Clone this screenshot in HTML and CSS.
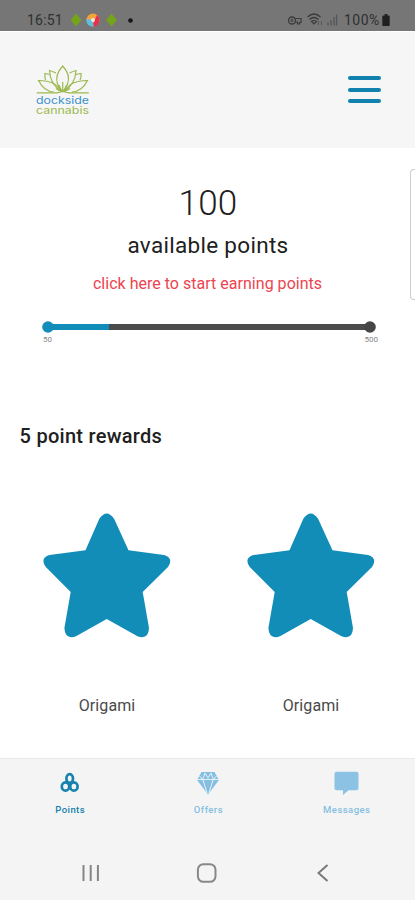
FILE: index.html
```html
<!DOCTYPE html>
<html lang="en">
<head>
<meta charset="utf-8">
<title>Points</title>
<link rel="stylesheet" href="styles.css">
</head>
<body>
<div class="screen">
  <div class="status">
    <span class="clock">16:51</span>
    <svg class="notifs" width="66" height="16" viewBox="0 0 66 16">
      <path class="leaf" d="M6 1.500L11.500 8L6 14.500L.500 8Z"/>
      <circle cx="23" cy="8" r="6.500" fill="#f3a43a"/>
      <path d="M27 3a6.500 6.500 0 0 1-5 11.500l2-5z" fill="#e5304f"/>
      <path d="M16.500 7a6.500 6.500 0 0 0 7.500 7.500L22 8z" fill="#5cbfe0"/>
      <circle cx="23" cy="8" r="2" fill="#f2e6dd"/>
      <path class="leaf" d="M41.500 1.500L47 8L41.500 14.500L36 8Z"/>
      <circle cx="60.500" cy="8.500" r="2.300" fill="#151515"/>
    </svg>
    <svg class="signals" width="54" height="16" viewBox="0 0 54 16" fill="none" stroke="#3a3a3a">
      <circle cx="5" cy="8.500" r="3.500" stroke-width="1.300"/>
      <circle cx="5" cy="8.500" r="1" stroke-width="1"/>
      <path d="M8 6.500h6v4h-1.500v1.500h-2v-2H8" stroke-width="1.200"/>
      <path d="M20.500 5q6.500-6 13 0M22.500 7.500q4.500-4 9 0M24.500 9.500q2.500-2 5 0L27 12z" stroke-width="1.200"/>
      <path d="M31.500 9v4M34.500 13V9" stroke-width="1" stroke="#555"/>
      <path d="M41 13.500v-3M44 13.500V8M47 13.500V5M49.500 13.500V2.500" stroke-width="1.300" stroke="#555"/>
    </svg>
    <span class="percent">100%</span>
    <svg class="battery" width="8" height="12" viewBox="0 0 8 13"><path d="M2.500 0h3v1.500H7q1 0 1 1V12q0 1-1 1H1q-1 0-1-1V2.500q0-1 1-1h1.500z" fill="#202020"/></svg>
  </div>

  <header class="header">
    <svg class="logo" width="58" height="56" viewBox="34 62 58 56">
      <g class="lotus">
        <path d="M62.700 66Q71 75 67.500 84Q66 88.500 62.700 91.500Q59 88.500 57.500 84Q54.500 75 62.700 66Z"/>
        <path d="M56 73Q51 71 49.500 70.500Q50 84 61.500 91.500M69.500 73Q74.500 71 76 70.500Q75.500 84 64 91.500"/>
        <path d="M49.500 74.500L45 73.500Q44.500 77 45.500 80M76 74.500L81 73.500Q81.500 77 80 80"/>
        <path d="M61 91.500Q57 83 48 81.500Q43 80.500 38.500 80.500Q44 91.500 54 92M64.500 91.500Q69 83 78 81.500Q83 80.500 87.500 80.500Q82 91.500 72 92"/>
        <path d="M36.800 92.800H57L62.700 91.500L69 92.800H88.800M62.700 91V82M61.500 91L59 85M64 91L66.500 85M60.500 91.500L56 88.500M65 91.500L70 88.500"/>
      </g>
      <text class="brand blue" x="36" y="104" textLength="53" lengthAdjust="spacingAndGlyphs">dockside</text>
      <text class="brand green" x="36" y="113.500" textLength="53" lengthAdjust="spacingAndGlyphs">cannabis</text>
    </svg>
    <div class="menu"><i></i><i></i><i></i></div>
  </header>

  <main class="content">
    <section class="balance">
      <div class="total">100</div>
      <div class="label">available points</div>
      <div class="earn">click here to start earning points</div>
      <div class="progress">
        <svg width="336" height="14" viewBox="0 0 336 14">
          <path d="M7 7H329" stroke="#4b4b4b" stroke-width="6"/>
          <circle cx="329" cy="7" r="5.800" fill="#464646"/>
          <path d="M7 7H68" stroke="#118db9" stroke-width="6"/>
          <circle cx="7" cy="7" r="5.800" fill="#118db9"/>
        </svg>
        <div class="range"><span>50</span><span>500</span></div>
      </div>
    </section>
    <h2 class="heading">5 point rewards</h2>
    <section class="rewards">
      <div class="reward">
        <svg width="128" height="125" viewBox="0 0 128 125"><path class="star" d="M42.500 37.300L56.200 6Q63.700-5 71.200 6L85.500 37.300L121 42Q131 45 125 54L99.700 79L106 115Q105.500 127 94.500 123.300L63.700 106L33 123.300Q22 127 21.400 115L27.700 79L2.800 54Q-3.500 45 6.500 42Z"/></svg>
        <span>Origami</span>
      </div>
      <div class="reward">
        <svg width="128" height="125" viewBox="0 0 128 125"><path class="star" d="M42.500 37.300L56.200 6Q63.700-5 71.200 6L85.500 37.300L121 42Q131 45 125 54L99.700 79L106 115Q105.500 127 94.500 123.300L63.700 106L33 123.300Q22 127 21.400 115L27.700 79L2.800 54Q-3.500 45 6.500 42Z"/></svg>
        <span>Origami</span>
      </div>
    </section>
    <div class="edge-handle"></div>
  </main>

  <footer class="footer">
    <nav class="tabs">
      <div class="tab active">
        <svg width="26" height="26" viewBox="0 0 26 26" fill="none" stroke="#1581ad" stroke-width="2.700">
          <ellipse cx="12.700" cy="8.500" rx="3.300" ry="4.300"/>
          <ellipse cx="8.500" cy="16.500" rx="3.700" ry="4.200"/>
          <ellipse cx="16.900" cy="16.500" rx="3.700" ry="4.200"/>
        </svg>
        <span>Points</span>
      </div>
      <div class="tab">
        <svg width="26" height="26" viewBox="0 0 26 26">
          <path d="M6.500 2H19.500L24 10L13 24.500L2 10Z" fill="#84bfe2"/>
          <path d="M2 9.500H24M4.500 6L7.500 9.500L10 3L13 8L16 3L18.500 9.500L21.500 6M8 10L12 23M18 10L14 23" fill="none" stroke="#f4f5f6" stroke-width=".9"/>
        </svg>
        <span>Offers</span>
      </div>
      <div class="tab">
        <svg width="26" height="26" viewBox="0 0 26 26"><path d="M2.500 1.700H22.500Q24.500 1.700 24.500 3.700V18.500Q24.500 20.300 22.500 20.300H14.500L9 25V20.300H2.500Q.5 20.300 .5 18.500V3.700Q.5 1.700 2.500 1.700Z" fill="#8cc2e4"/></svg>
        <span>Messages</span>
      </div>
    </nav>
    <div class="system">
      <svg width="24" height="20" viewBox="0 0 24 20"><path d="M4.500 2V18M11.700 2V18M18.900 2V18" stroke="#858585" stroke-width="2"/></svg>
      <svg width="24" height="20" viewBox="0 0 24 20"><rect x="2.900" y="1.200" width="17.600" height="17.600" rx="5.500" fill="none" stroke="#888" stroke-width="2"/></svg>
      <svg width="24" height="20" viewBox="0 0 24 20"><path d="M16.500 2L7.500 10L16.500 18" fill="none" stroke="#777" stroke-width="1.900"/></svg>
    </div>
  </footer>
</div>
</body>
</html>
```
FILE: styles.css
```css
* { box-sizing: border-box; }
body { margin: 0; background: #fff; font-family: Roboto, sans-serif; color: #202020; }
svg { display: block; flex: none; }
.screen { width: 415px; height: 900px; display: flex; flex-direction: column; overflow: hidden; }

.status { height: 31px; flex: none; display: flex; align-items: center; padding: 9px 25px 0 27px; background: #767676; font-size: 14px; line-height: 16px; color: #303030; }
.clock { width: 43px; letter-spacing: .2px; }
.leaf { fill: #75a31c; }
.signals { margin-left: auto; margin-right: 3px; }
.percent { width: 38px; letter-spacing: .5px; }

.header { height: 117px; flex: none; display: flex; justify-content: space-between; align-items: flex-start; padding: 31px 34px 0; background: #f6f6f6; border-top: 1px solid #fff; }
.logo { margin-top: -1px; }
.lotus { fill: none; stroke: #9cb94f; stroke-width: 1.200; }
.brand { font-family: Inter, sans-serif; font-size: 10.500px; font-weight: 400; }
.blue { fill: #3a91cf; }
.green { fill: #9cb94f; }
.menu { width: 33px; margin-top: 13px; display: grid; gap: 7.500px; }
.menu i { height: 4px; border-radius: 2px; background: #1181ad; }

.content { height: 610px; flex: none; position: relative; }
.balance { text-align: center; padding-top: 35px; }
.total { font-size: 35px; line-height: 41px; font-weight: 300; letter-spacing: .2px; padding-left: 1px; }
.label { margin-top: 7px; font-size: 22.500px; line-height: 28px; letter-spacing: .3px; padding-left: 1px; }
.earn { margin-top: 15px; font-size: 16px; line-height: 20px; letter-spacing: .02px; color: #ec4450; }
.progress { width: 334px; margin: 26px 0 0 41px; }
.range { display: flex; justify-content: space-between; padding: 1px 0 0 2px; margin-right: -3px; font-size: 8px; line-height: 10px; color: #858585; }
.heading { margin: 78px 0 0 19.500px; font-size: 20px; line-height: 26px; font-weight: 500; letter-spacing: .28px; }
.rewards { display: flex; gap: 76px; padding: 64px 0 0 43px; }
.reward { width: 128px; display: flex; flex-direction: column; align-items: center; font-size: 16px; line-height: 20px; letter-spacing: .1px; color: #4a4a4a; }
.reward span { margin-top: 58px; }
.star { fill: #128db8; }
.edge-handle { position: absolute; right: -2px; top: 21px; width: 7px; height: 131px; border: 1.500px solid #ccc; border-right: 0; border-radius: 4px 0 0 4px; }

.footer { flex: 1; background: #f4f4f4; border-top: 1px solid #e8e8e8; }
.tabs { display: grid; grid-template-columns: repeat(3, 138.300px); padding: 11px 0 0 1px; }
.tab { display: flex; flex-direction: column; align-items: center; gap: 8px; font-size: 9.500px; line-height: 12px; font-weight: 500; letter-spacing: .45px; color: #84bfe2; }
.active { color: #1581ad; }
.system { display: flex; gap: 92px; padding: 47px 0 0 79px; }
```
